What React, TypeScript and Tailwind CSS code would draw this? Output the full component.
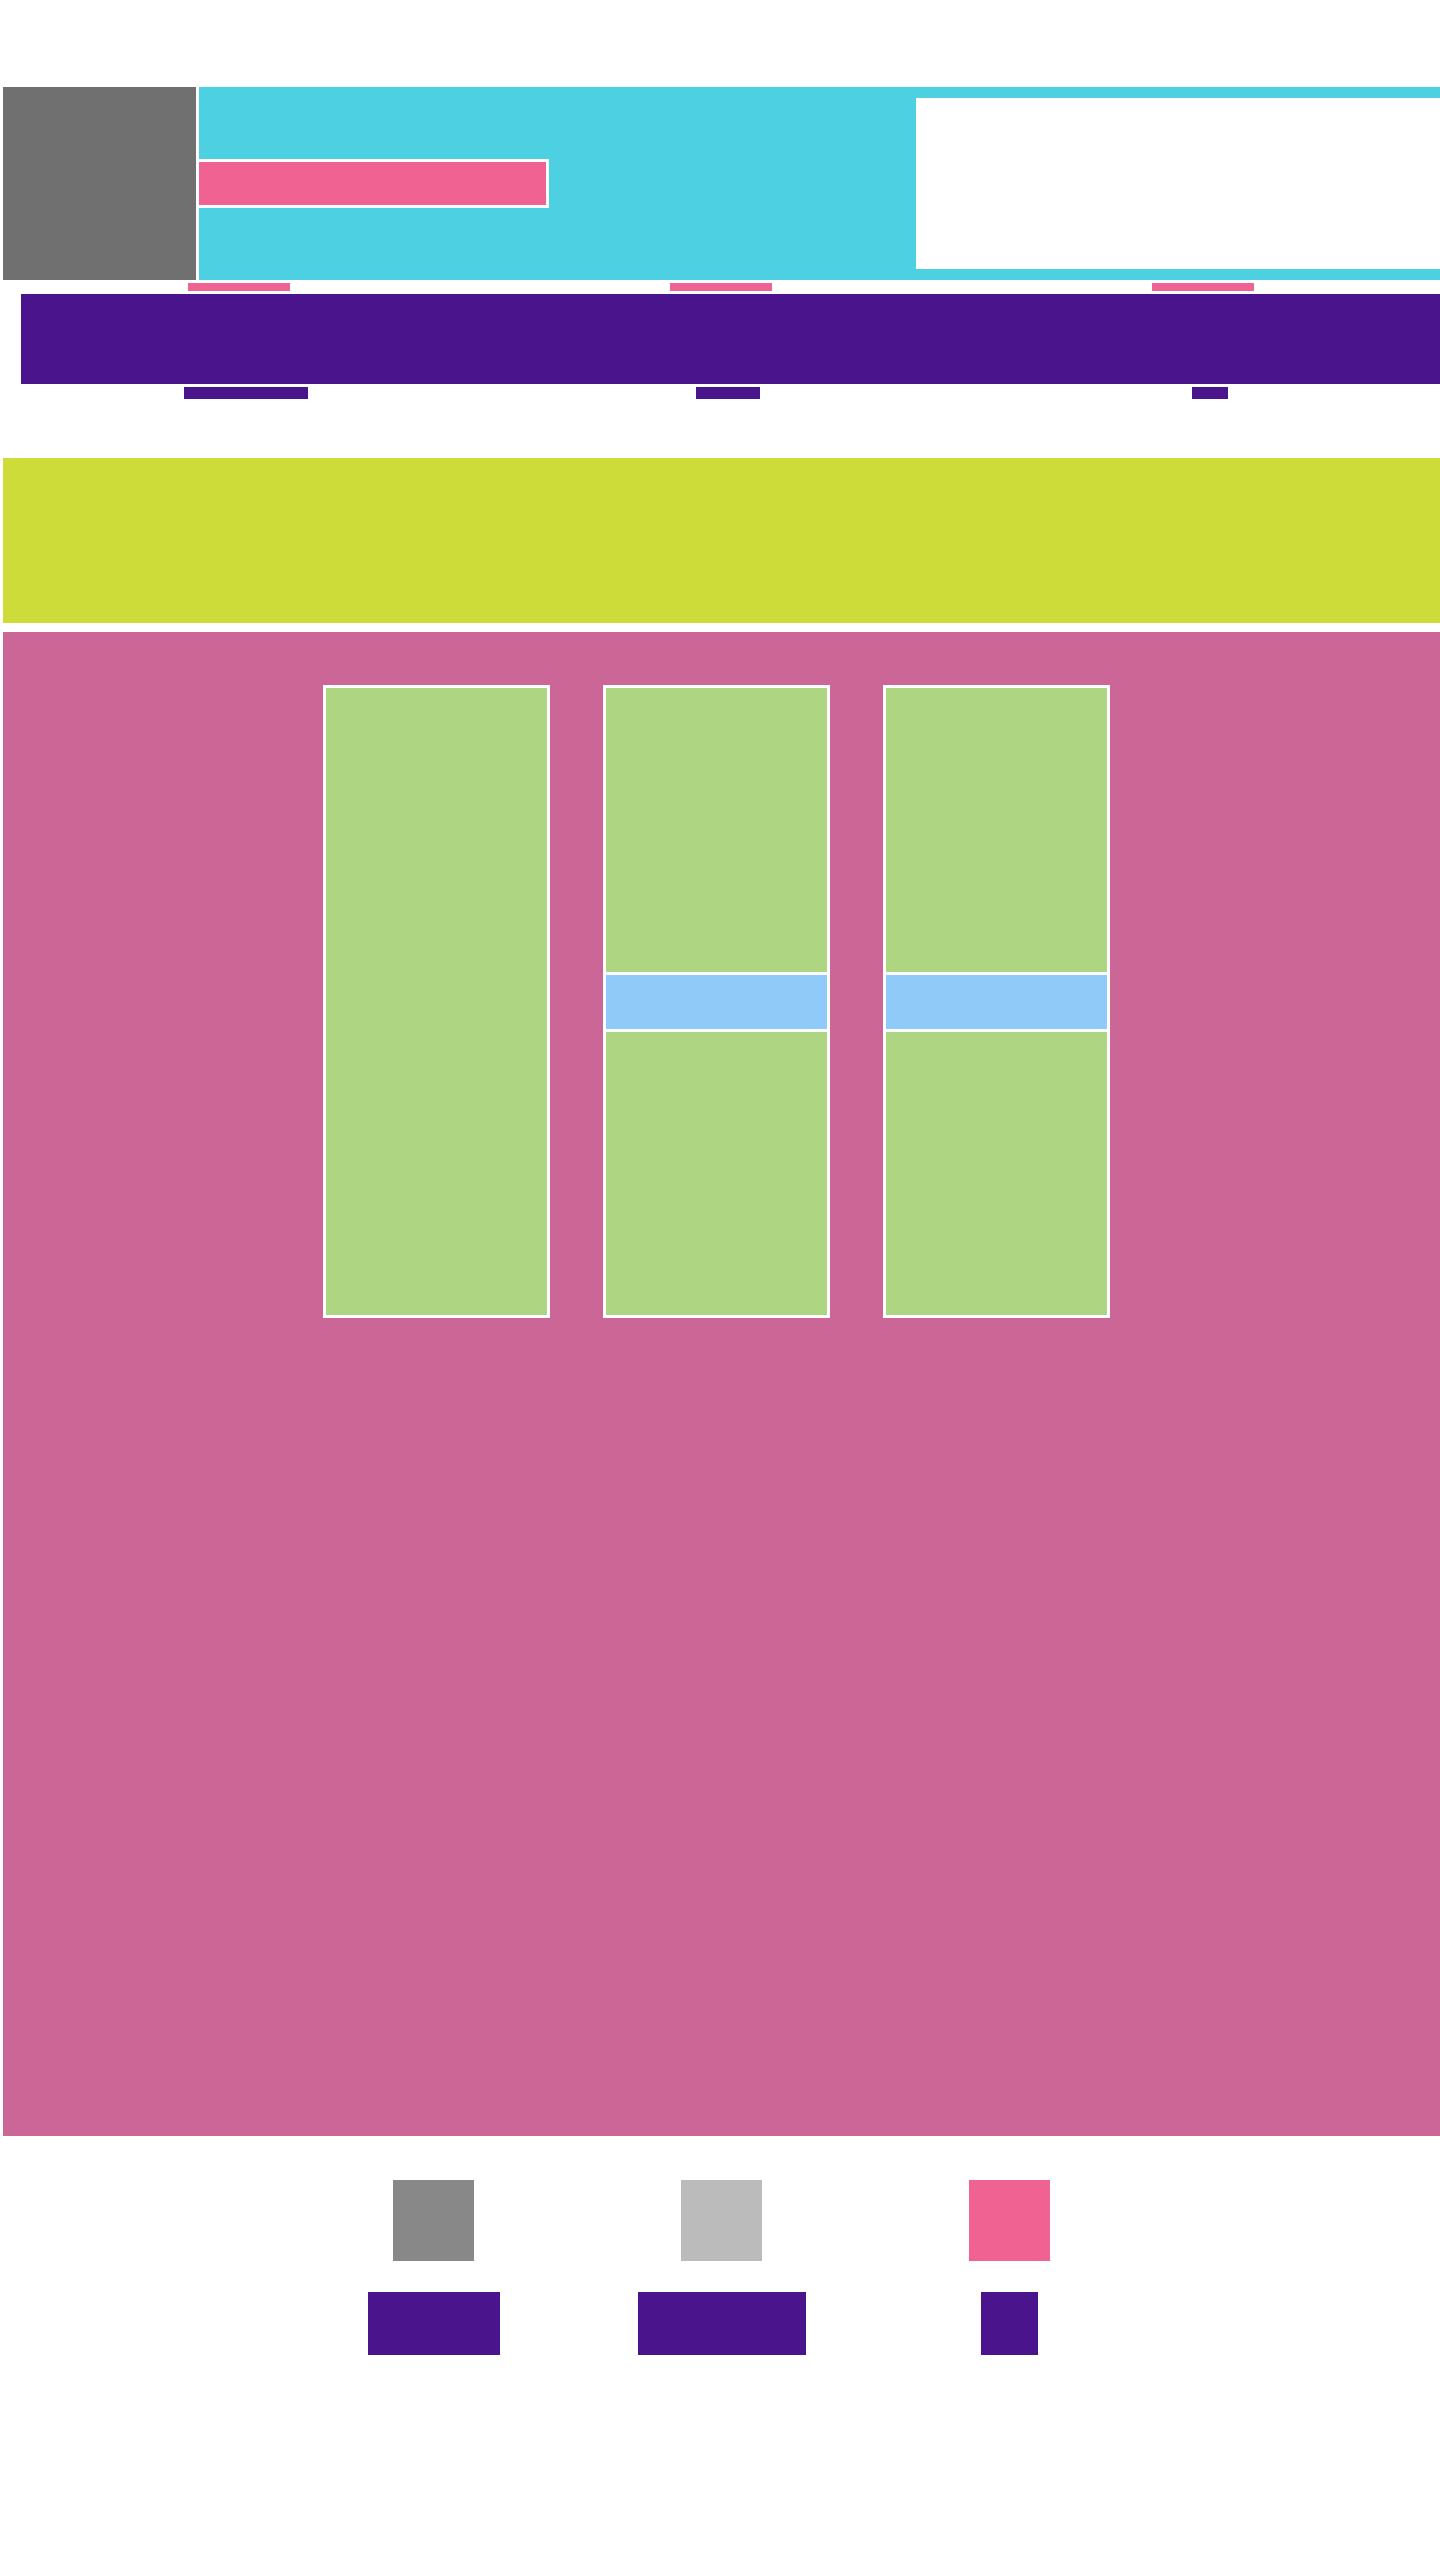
const pinkTicks = [0, 1, 2];
const purpleTicks = ['w-[124px]', 'w-[64px]', 'w-[36px]'];
const swatches = ['bg-[#888888]', 'bg-[#bbbbbb]', 'bg-[#f06292]'];
const chips = ['w-[132px]', 'w-[168px]', 'w-[57px]'];

const Column = ({ split }: { split?: boolean }) => (
  <div className="flex h-[633px] w-[227px] flex-col border-[3px] border-white bg-[#aed581]">
    {split && (
      <>
        <div className="flex-1" />
        <div className="h-[60px] border-y-[3px] border-white bg-[#90caf9]" />
        <div className="flex-1" />
      </>
    )}
  </div>
);

export default function App() {
  return (
    <div className="min-h-[2560px] w-[1440px] overflow-hidden bg-white pl-[3px] pt-[87px]">
      {/* header strip */}
      <div className="flex h-[193px]">
        <div className="w-[193px] bg-[#707070]" />
        <div className="ml-[3px] flex flex-1 items-center bg-[#4dd0e1]">
          <div className="h-[49px] w-[350px] border-y-[3px] border-r-[3px] border-white bg-[#f06292]" />
          <div className="ml-[367px] h-[171px] flex-1 bg-white" />
        </div>
      </div>

      <div className="mt-[3px] grid grid-cols-[472px_472px_472px] gap-[10px]">
        {pinkTicks.map((i) => (
          <div key={i} className="flex justify-center">
            <div className="h-[8px] w-[102px] bg-[#f06292]" />
          </div>
        ))}
      </div>

      <div className="ml-[18px] mt-[3px] h-[90px] bg-[#4a148c]" />

      <div className="mt-[3px] grid grid-cols-[472px_472px_472px] gap-[10px] pl-[7px]">
        {purpleTicks.map((w) => (
          <div key={w} className="flex justify-center">
            <div className={`h-[12px] bg-[#4a148c] ${w}`} />
          </div>
        ))}
      </div>

      <div className="mt-[59px] h-[165px] bg-[#cddc39]" />

      {/* main panel */}
      <div className="mt-[9px] flex h-[1504px] items-start gap-[53px] bg-[#cb6697] pl-[320px] pt-[53px]">
        <Column />
        <Column split />
        <Column split />
      </div>

      {/* footer swatches */}
      <div className="flex justify-center pt-[44px]">
        <div className="grid grid-cols-[288px_288px_288px] gap-y-[31px]">
          {swatches.map((c) => (
            <div key={c} className="flex justify-center">
              <div className={`h-[81px] w-[81px] ${c}`} />
            </div>
          ))}
          {chips.map((w) => (
            <div key={w} className="flex justify-center">
              <div className={`h-[63px] bg-[#4a148c] ${w}`} />
            </div>
          ))}
        </div>
      </div>
    </div>
  );
}
